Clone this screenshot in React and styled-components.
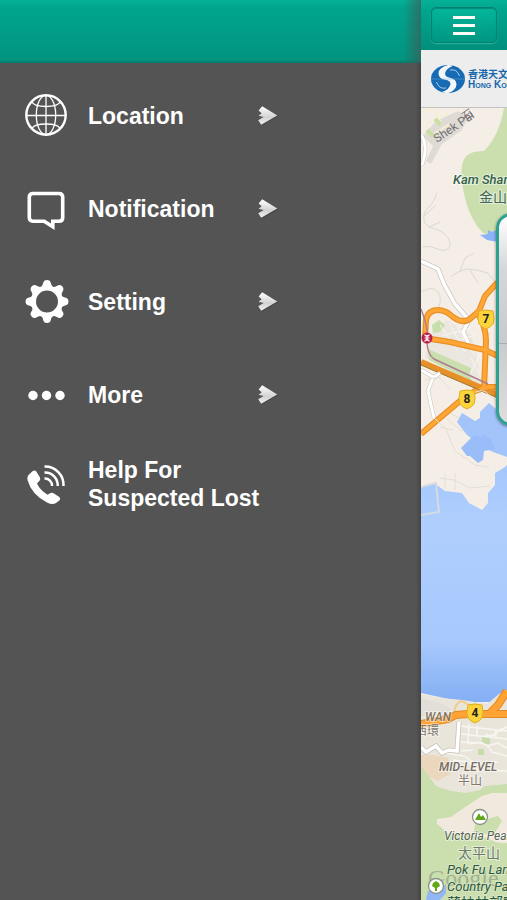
import React from 'react';
import styled, { createGlobalStyle } from 'styled-components';

const GlobalStyle = createGlobalStyle`
  * {
    box-sizing: border-box;
  }
  body {
    margin: 0;
    background: #545454;
    font-family: "Liberation Sans", "Noto Sans CJK TC", sans-serif;
  }
`;

const Screen = styled.div`
  display: flex;
  height: 100vh;
  overflow: hidden;
`;

const Drawer = styled.aside`
  flex: 1;
  display: flex;
  flex-direction: column;
  background: linear-gradient(to left, #444444, #545454 5px);
`;

const DrawerHeader = styled.header`
  height: 63px;
  flex: none;
  background:
    linear-gradient(to left, rgba(70, 80, 76, 0.6), rgba(70, 80, 76, 0) 18px),
    linear-gradient(to bottom, #06b297, #00a58e 12%, #019480 95%, #087a6c);
`;

const Menu = styled.ul`
  list-style: none;
  margin: 0;
  padding: 6px 0 0;
`;

const MenuButton = styled.button`
  width: 100%;
  height: ${({ $short }) => ($short ? '86px' : '93px')};
  display: grid;
  grid-template-columns: 44px 150px 24px;
  column-gap: 19px;
  align-items: center;
  padding: 0 0 0 25px;
  border: 0;
  background: none;
  color: #ffffff;
  font: bold 23px/28px "Liberation Sans", sans-serif;
  text-align: left;
  white-space: nowrap;
  cursor: pointer;

  svg {
    display: block;
  }
`;

const Peek = styled.main`
  flex: 0 0 86px;
  display: flex;
  flex-direction: column;
  overflow: hidden;
  background: #ededee;
`;

const TopBar = styled.div`
  height: 50px;
  flex: none;
  padding: 7px 0 0 10px;
  background: linear-gradient(to bottom, #06b297, #00a58e 20%, #01907c);
`;

const MenuToggle = styled.button`
  display: flex;
  flex-direction: column;
  align-items: center;
  justify-content: center;
  gap: 5px;
  width: 66px;
  height: 36px;
  padding: 0;
  border: 1px solid #07806f;
  border-radius: 5px;
  background: linear-gradient(to bottom, #05b79b, #01a28b 60%, #019783);
  box-shadow: 0 1px 1px #25b5a0, inset 0 1px 1px #078a78;
  cursor: pointer;
`;

const Bar = styled.span`
  width: 22px;
  height: 3px;
  background: #fffdf5;
`;

const Brand = styled.div`
  display: flex;
  align-items: center;
  gap: 3px;
  height: 58px;
  flex: none;
  padding-left: 10px;
  border-bottom: 1px solid #c3c3c0;
  background: #ededee;
  color: #1667ac;
  white-space: nowrap;

  svg {
    flex: none;
  }
`;

const BrandText = styled.div`
  display: flex;
  flex-direction: column;
`;

const BrandChinese = styled.span`
  font: bold 10px/11px "Noto Sans CJK TC", sans-serif;
`;

const BrandEnglish = styled.span`
  font: bold 10px/11px "Liberation Sans", sans-serif;
  font-variant: small-caps;
`;

const MapArea = styled.section`
  position: relative;
  flex: 1;
  min-height: 0;
  overflow: hidden;
  background: #f4eee6;

  > svg {
    display: block;
    width: 100%;
    height: 100%;
  }
`;

const WeatherCard = styled.div`
  position: absolute;
  top: 105px;
  left: 75px;
  width: 120px;
  height: 213px;
  border: 3px solid #2f9f92;
  border-radius: 15px;
  background: linear-gradient(to bottom, #ffffff, #d6d7d8 25%, #c9cacb 60%, #dedede);
  box-shadow: 0 1px 3px rgba(0, 0, 0, 0.5);
`;

const CardRule = styled.hr`
  margin: 127px 0 0;
  border: 0;
  border-top: 1px solid #aaaeae;
`;

const GlobeIcon = () => (
  <svg width="44" height="44" viewBox="0 0 44 44" fill="none" stroke="#fff" aria-hidden="true">
    <circle cx="21" cy="21" r="19.7" strokeWidth="2.4" />
    <g strokeWidth="1.3">
      <ellipse cx="21" cy="21" rx="9.7" ry="19.7" />
      <path d="M21 2v39M2 21.5h39" />
      <path d="M7 8Q9 12.500 21 12.500T35 8M7 34.500Q9 30 21 30T35 34.500" />
    </g>
  </svg>
);

const BubbleIcon = () => (
  <svg width="44" height="44" viewBox="0 0 44 44" fill="none" aria-hidden="true">
    <path
      d="M8 6.500h26q3.700 0 3.700 3.700v20.300q0 3.700-3.700 3.700h-6.200v5.600l-8.600-5.600H8q-3.700 0-3.700-3.700V10.200Q4.300 6.500 8 6.500Z"
      stroke="#fff"
      strokeWidth="3.6"
    />
  </svg>
);

const GearIcon = () => (
  <svg width="44" height="44" viewBox="-22 -21.5 44 44" aria-hidden="true">
    <g fill="#fff">
      {[0, 45, 90, 135, 180, 225, 270, 315].map((angle) => (
        <path
          key={angle}
          d="M-7-13Q-4-16-3.500-19.500Q-3-21.500 0-21.500Q3-21.500 3.500-19.500Q4-16 7-13Z"
          transform={`rotate(${angle})`}
        />
      ))}
    </g>
    <circle r="13.500" fill="none" stroke="#fff" strokeWidth="5" />
  </svg>
);

const DotsIcon = () => (
  <svg width="44" height="44" viewBox="0 0 44 44" fill="#fff" aria-hidden="true">
    <circle cx="8" cy="22.500" r="4.700" />
    <circle cx="21.500" cy="22.500" r="4.700" />
    <circle cx="35" cy="22.500" r="4.700" />
  </svg>
);

const PhoneIcon = () => (
  <svg width="44" height="44" viewBox="0 -3 44 44" aria-hidden="true">
    <path
      fill="#fff"
      d="M4 9.500L7.500 6.200Q9.800 4.700 11.300 6.500L15 12.500Q15.800 14.800 14 16.200L12 18.500Q15 25 22.500 29.800L25.500 28Q27.300 27.300 29 28.500L34.300 32Q36 33.500 34.600 35.300L31 38Q27.500 40.300 22 37.500Q6.500 29.500 2.700 15.500Q1.700 11.700 4 9.500Z"
    />
    <g fill="none" stroke="#fff" strokeWidth="2.500">
      <path d="M19.500 1.500A18.500 18.500 0 0 1 38.500 21" />
      <path d="M19.500 7.500A12.700 12.700 0 0 1 32.700 21" />
      <path d="M19.500 13.500A7 7 0 0 1 27 21" />
    </g>
  </svg>
);

const ArrowIcon = () => (
  <svg width="24" height="24" viewBox="0 0 24 24" aria-hidden="true">
    <defs>
      <linearGradient id="arrowFill" x1="0" y1="0" x2="0" y2="1">
        <stop offset="0" stopColor="#ffffff" />
        <stop offset="0.600" stopColor="#d2d2d2" />
        <stop offset="1" stopColor="#f2f2f2" />
      </linearGradient>
    </defs>
    <path d="M5 4L21 12.500L4.500 21.500L2 17L8 13.500L3 11Z" fill="#343434" opacity="0.500" />
    <path d="M5.200 2.200L20.300 11.500L4.200 20.700L1.200 16.200L6.600 13L1.600 11.800L4.600 9.300L1.600 6.600Z" fill="url(#arrowFill)" />
  </svg>
);

const BrandLogo = () => (
  <svg width="34" height="30" viewBox="0 0 34 30" aria-hidden="true">
    <ellipse cx="17" cy="15" rx="17" ry="14" fill="#176bb3" />
    <path
      d="M17 1Q7.500 3.500 7.500 9.500Q8 15 14 15.800Q19.500 16.500 19.500 20Q19 25 11 28Q15 29.500 18 28.800Q25.500 26 25.500 20Q25 15.200 19.500 14Q14 13 14 9.500Q14.500 5 22 1.800Q19.500 .8 17 1Z"
      fill="#f4f7fa"
    />
    <path d="M19 6Q26 4.500 28.500 12M15 24Q8 25.500 5.500 18" fill="none" stroke="#a9cbe8" />
    <path d="M0 15h34" stroke="#6aa2d0" strokeWidth="0.500" />
  </svg>
);

const RouteShield = ({ x, y, number }) => (
  <g transform={`translate(${x} ${y})`}>
    <path d="M-7-8Q0-10 7-8Q9 0 7 5Q5 8 0 10Q-5 8-7 5Q-9 0-7-8Z" fill="#fbd43b" stroke="#e5ac20" />
    <text y="4" textAnchor="middle" fontSize="12" fontWeight="bold" fill="#222">{number}</text>
  </g>
);

const ParkPin = ({ x, y, children }) => (
  <g transform={`translate(${x} ${y})`}>
    <circle r="7.500" fill="#fff" stroke="#8c9487" strokeWidth="1.300" />
    {children}
  </g>
);

const CityMap = () => (
  <svg viewBox="421 108 86 792" preserveAspectRatio="xMinYMin slice" fontFamily='Roboto, "Noto Sans CJK TC", sans-serif' role="img" aria-label="Map">
    <defs>
      <linearGradient id="sea" x1="0" y1="0" x2="0" y2="1">
        <stop offset="0" stopColor="#a3c6fc" />
        <stop offset="0.250" stopColor="#b0cfff" />
        <stop offset="0.750" stopColor="#a6c8fc" />
        <stop offset="1" stopColor="#84aff4" />
      </linearGradient>
    </defs>
    <path d="M421 108h86v792h-86z" fill="#f5eee6" />

    {/* blocks and small streets in the north */}
    <path d="M436 121l22-10 10 6-6 13-20 14-11 20-5-3 7-15-10-10z" fill="#dedbd5" />
    <path d="M421 113l12-5M424 126l24-14M431 136l20-13M434 109l8 16" stroke="#f4efd4" strokeWidth="2" />
    <path d="M427 130l6 6M435 119l6 6" stroke="#c8dea2" strokeWidth="4" />
    <path d="M421 135q8 10 1 30" fill="none" stroke="#c9c5be" strokeWidth="4" />
    <path d="M421 135q8 10 1 30" fill="none" stroke="#fff" strokeWidth="3" />
    <path d="M504 108h3v128l-16 0-9-4q-12-13-17-34-6-25-2-36 3-11 21-11 15-15 20-43z" fill="#cadeae" />
    <path d="M480 235l8-1 0-4 4 2 6-3v13l-11-2z" fill="#8db4f8" />
    <g fill="none" stroke="#dcd8d0">
      <path d="M437 193q-3 10-11 17-6 11 3 17 18 4 21 15 1 10-10 8-11-5-17-3" />
      <path d="M424 216l12-11M429 227l11-5" />
      <path d="M451 277q6-6 17-8l8 1 12 3 6 8M460 271l5-13 9-5M470 270l8 13M421 292q12-7 17 0 6 11-3 20" />
    </g>

    {/* Kowloon neighbourhoods */}
    <path d="M433 329l14-9 25 16 12 55-32-16-27-18z" fill="#ebe7e0" />
    <path d="M432 325l7-5 6 5-5 7-7 1z" fill="#c8dfac" />
    <path d="M428 349l43 19 0 13-42-21z" fill="#cadeae" />
    <path d="M421 261l17 8 6 15 11 20 14 16-6 12 6 12" fill="none" stroke="#cbc7c1" strokeWidth="5" />
    <path d="M421 261l17 8 6 15 11 20 14 16-6 12 6 12" fill="none" stroke="#fff" strokeWidth="3.500" />
    <path d="M440 325l17 25M449 323l16 29M457 327l18 29M442 336l28-8M449 344l26-9M471 358l10 19M481 352l-12 24" stroke="#f9f7f3" />
    <g fill="none" stroke="#e89028" strokeWidth="6">
      <path d="M425 339l1-19q2-10 12-10 8 0 15 7 10 7 17 2l9-8 6-15 11-12 11-8" />
      <path d="M476 311q10 14 10 30l-2 48" />
      <path d="M425 338l25 4 35 8 13 6" />
      <path d="M421 362l77 33" />
      <path d="M421 434l39-33 15-10 13-4h13" />
    </g>
    <g fill="none" stroke="#ffa635" strokeWidth="3.500">
      <path d="M425 339l1-19q2-10 12-10 8 0 15 7 10 7 17 2l9-8 6-15 11-12 11-8" />
      <path d="M476 311q10 14 10 30l-2 48" />
      <path d="M425 338l25 4 35 8 13 6" />
      <path d="M421 434l39-33 15-10 13-4h13" />
    </g>
    <path d="M421 309q8 20 6 32 0 13 7 18l54 25" fill="none" stroke="#ae7f91" strokeWidth="1.500" />
    <path d="M421 365l77 33" stroke="#9d7b35" />
    <circle cx="427" cy="338" r="5.500" fill="#b91f4a" />
    <path d="M424.500 334.500q2.500 4 5 0M424.500 341.500q2.500-4 5 0M427 335v6M424.500 338h5" fill="none" stroke="#fff" strokeWidth="1.200" />

    {/* harbour */}
    <path d="M421 370l12 7-5 14 6 27M433 378l7-5" fill="none" stroke="#c9c5be" strokeWidth="4" />
    <path d="M421 370l12 7-5 14 6 27M433 378l7-5" fill="none" stroke="#fff" strokeWidth="3" />
    <path d="M434 418l12 11 9 22 20 14 14 2M447 419l15 12 12-6M450 413l18 10M440 427l14 3M425 380l14-3 12 13M440 478l14 2 16 8 20-2M461 404q17-18 25-12l16 14M445 474v14M455 473v17" fill="none" stroke="#e3dfd8" />
    <path d="M457 422l5-9 13 8 5-3 0-6 5-5 4-4 8 7 10 9v38l-14-5-10-5-16-12z" fill="#a3c4fb" />
    <path d="M461 448l13-13 7 2 2-3 8 5 4 10-11 2-1 9-5 3-8-7-3 0z" fill="#98bdf9" />
    <path d="M421 487l13-4 11 8 17 2 7 10 13 7 6-7 0-10 7-8 0-12 10-6 2-2V702l-32 0-17-1-37-8z" fill="url(#sea)" />
    <path d="M421 487l15-4 3 29-18 3" fill="none" stroke="#d5dbe1" strokeWidth="2" />

    {/* Hong Kong Island */}
    <path d="M421 694l20 4 22 2 24 4 12-10 8-4v210h-86z" fill="#eae5db" />
    <path d="M421 698l17 4 15 8-15 5-17 1z" fill="#e2dfd8" />
    <path d="M421 755h13l14 3 2 16-12 7-17-8z" fill="#ead7bd" />
    <path d="M421 766l15 20 15 5 15 2 14-3 5-4 22-2v116h-86z" fill="#cadeae" />
    <path d="M507 793v50q-12 1-19-5l-26-5-13 1-12-10 0-5 14-2 17-12 14-9 10-3z" fill="#f2e9de" />
    <path d="M473 834l2-9 13-6 10-3 4 5-8 13z" fill="#cadeae" />
    <path d="M482 737h8v7h-8zM478 749h6v6h-6z" fill="#c8dcae" />
    <g fill="none" stroke="#f8f6f1" strokeWidth="1.500">
      <path d="M460 726l47 5M461 734l46 5M461 742l16 1M461 751l12-1M469 724l-1 20M477 726v11M495 729l1 10M446 753l18 3 12 8 22-2M453 760l15 2 10 8 29 1" />
      <path d="M470 744q15-5 22 8l15 4M488 746l10-3 9 5" />
      <path d="M485 735q8 3 13-4l9-4" strokeWidth="2" />
    </g>
    <path d="M421 747l5 5 10-6 6 7 7-3 8 1 2-29" fill="none" stroke="#c7c3bb" strokeWidth="5" />
    <path d="M421 747l5 5 10-6 6 7 7-3 8 1 2-29" fill="none" stroke="#fff" strokeWidth="3.500" />
    <path d="M454 712q2-10 8-11l10 6" fill="none" stroke="#efcd8c" strokeWidth="2" />
    <path d="M421 724l27-5 8-4 12-1h39M490 713l8-8 9-14" fill="none" stroke="#e28a24" strokeWidth="8" />
    <path d="M421 724l27-5 8-4 12-1h39M490 713l8-8 9-14" fill="none" stroke="#ffa334" strokeWidth="6" />
    <path d="M426 900l2-9 12 0 6-7 0 9-6 7z" fill="#91b7f7" />

    <RouteShield x={486} y={319} number="7" />
    <RouteShield x={467} y={399} number="8" />
    <RouteShield x={475} y={713} number="4" />

    <text x="437" y="143" fontSize="12" fill="#746f70" transform="rotate(-34 437 143)">Shek Pai</text>
    <text x="465" y="121" fontSize="11" fill="#746f70" transform="rotate(-34 465 121)">石</text>

    <g stroke="#fff" strokeOpacity="0.500" strokeWidth="2" paintOrder="stroke">
      <g fontStyle="italic">
        <text x="453" y="184" fontSize="13" fontWeight="500" fill="#32614a">Kam Shan</text>
        <text x="425" y="721" fontSize="12" fontWeight="500" fill="#827564">WAN</text>
        <text x="439" y="771" fontSize="12" fontWeight="500" fill="#756d63">MID-LEVEL</text>
        <text x="444" y="840" fontSize="12" fill="#586455">Victoria Peak</text>
      </g>
      <g fill="#80786c">
        <text x="479" y="202" fontSize="14" fill="#416852">金山</text>
        <text x="415" y="735" fontSize="12">西環</text>
        <text x="458" y="785" fontSize="12">半山</text>
        <text x="458" y="858" fontSize="14" fill="#6f7b68">太平山</text>
      </g>
    </g>
    <text x="428" y="886" fontSize="24" fontFamily="Liberation Serif, serif" fill="#87937e" fillOpacity="0.600">Google</text>
    <g stroke="#e1ecd2" strokeOpacity="0.600" strokeWidth="2" paintOrder="stroke" fill="#2e5a40">
      <g fontSize="13" fontStyle="italic">
        <text x="447" y="874">Pok Fu Lam</text>
        <text x="447" y="891">Country Park</text>
      </g>
      <text x="447" y="908" fontSize="14">薄扶林郊野</text>
    </g>
    <ParkPin x={480} y={817}>
      <path d="M-5 3l4-7 2 4 2-2 3 5z" fill="#63a719" />
    </ParkPin>
    <ParkPin x={436} y={886}>
      <path d="M0-5l3 2 1 3-3 2v3h-2V2l-3-2 1-3z" fill="#63a719" />
    </ParkPin>
  </svg>
);

const items = [
  { label: 'Location', icon: <GlobeIcon />, arrow: true },
  { label: 'Notification', icon: <BubbleIcon />, arrow: true },
  { label: 'Setting', icon: <GearIcon />, arrow: true },
  { label: 'More', icon: <DotsIcon />, arrow: true },
  { label: <>Help For<br />Suspected Lost</>, icon: <PhoneIcon />, arrow: false },
];

const App = () => {
  return (
    <>
      <GlobalStyle />
      <Screen>
        <Drawer>
          <DrawerHeader />
          <nav>
            <Menu>
              {items.map((item, index) => (
                <li key={index}>
                  <MenuButton type="button" $short={!item.arrow}>
                    {item.icon}
                    <span>{item.label}</span>
                    {item.arrow && <ArrowIcon />}
                  </MenuButton>
                </li>
              ))}
            </Menu>
          </nav>
        </Drawer>
        <Peek>
          <TopBar>
            <MenuToggle type="button" aria-label="Menu">
              <Bar />
              <Bar />
              <Bar />
            </MenuToggle>
          </TopBar>
          <Brand>
            <BrandLogo />
            <BrandText>
              <BrandChinese>香港天文台</BrandChinese>
              <BrandEnglish>Hong Kong Observatory</BrandEnglish>
            </BrandText>
          </Brand>
          <MapArea>
            <CityMap />
            <WeatherCard>
              <CardRule />
            </WeatherCard>
          </MapArea>
        </Peek>
      </Screen>
    </>
  );
};

export default App;
